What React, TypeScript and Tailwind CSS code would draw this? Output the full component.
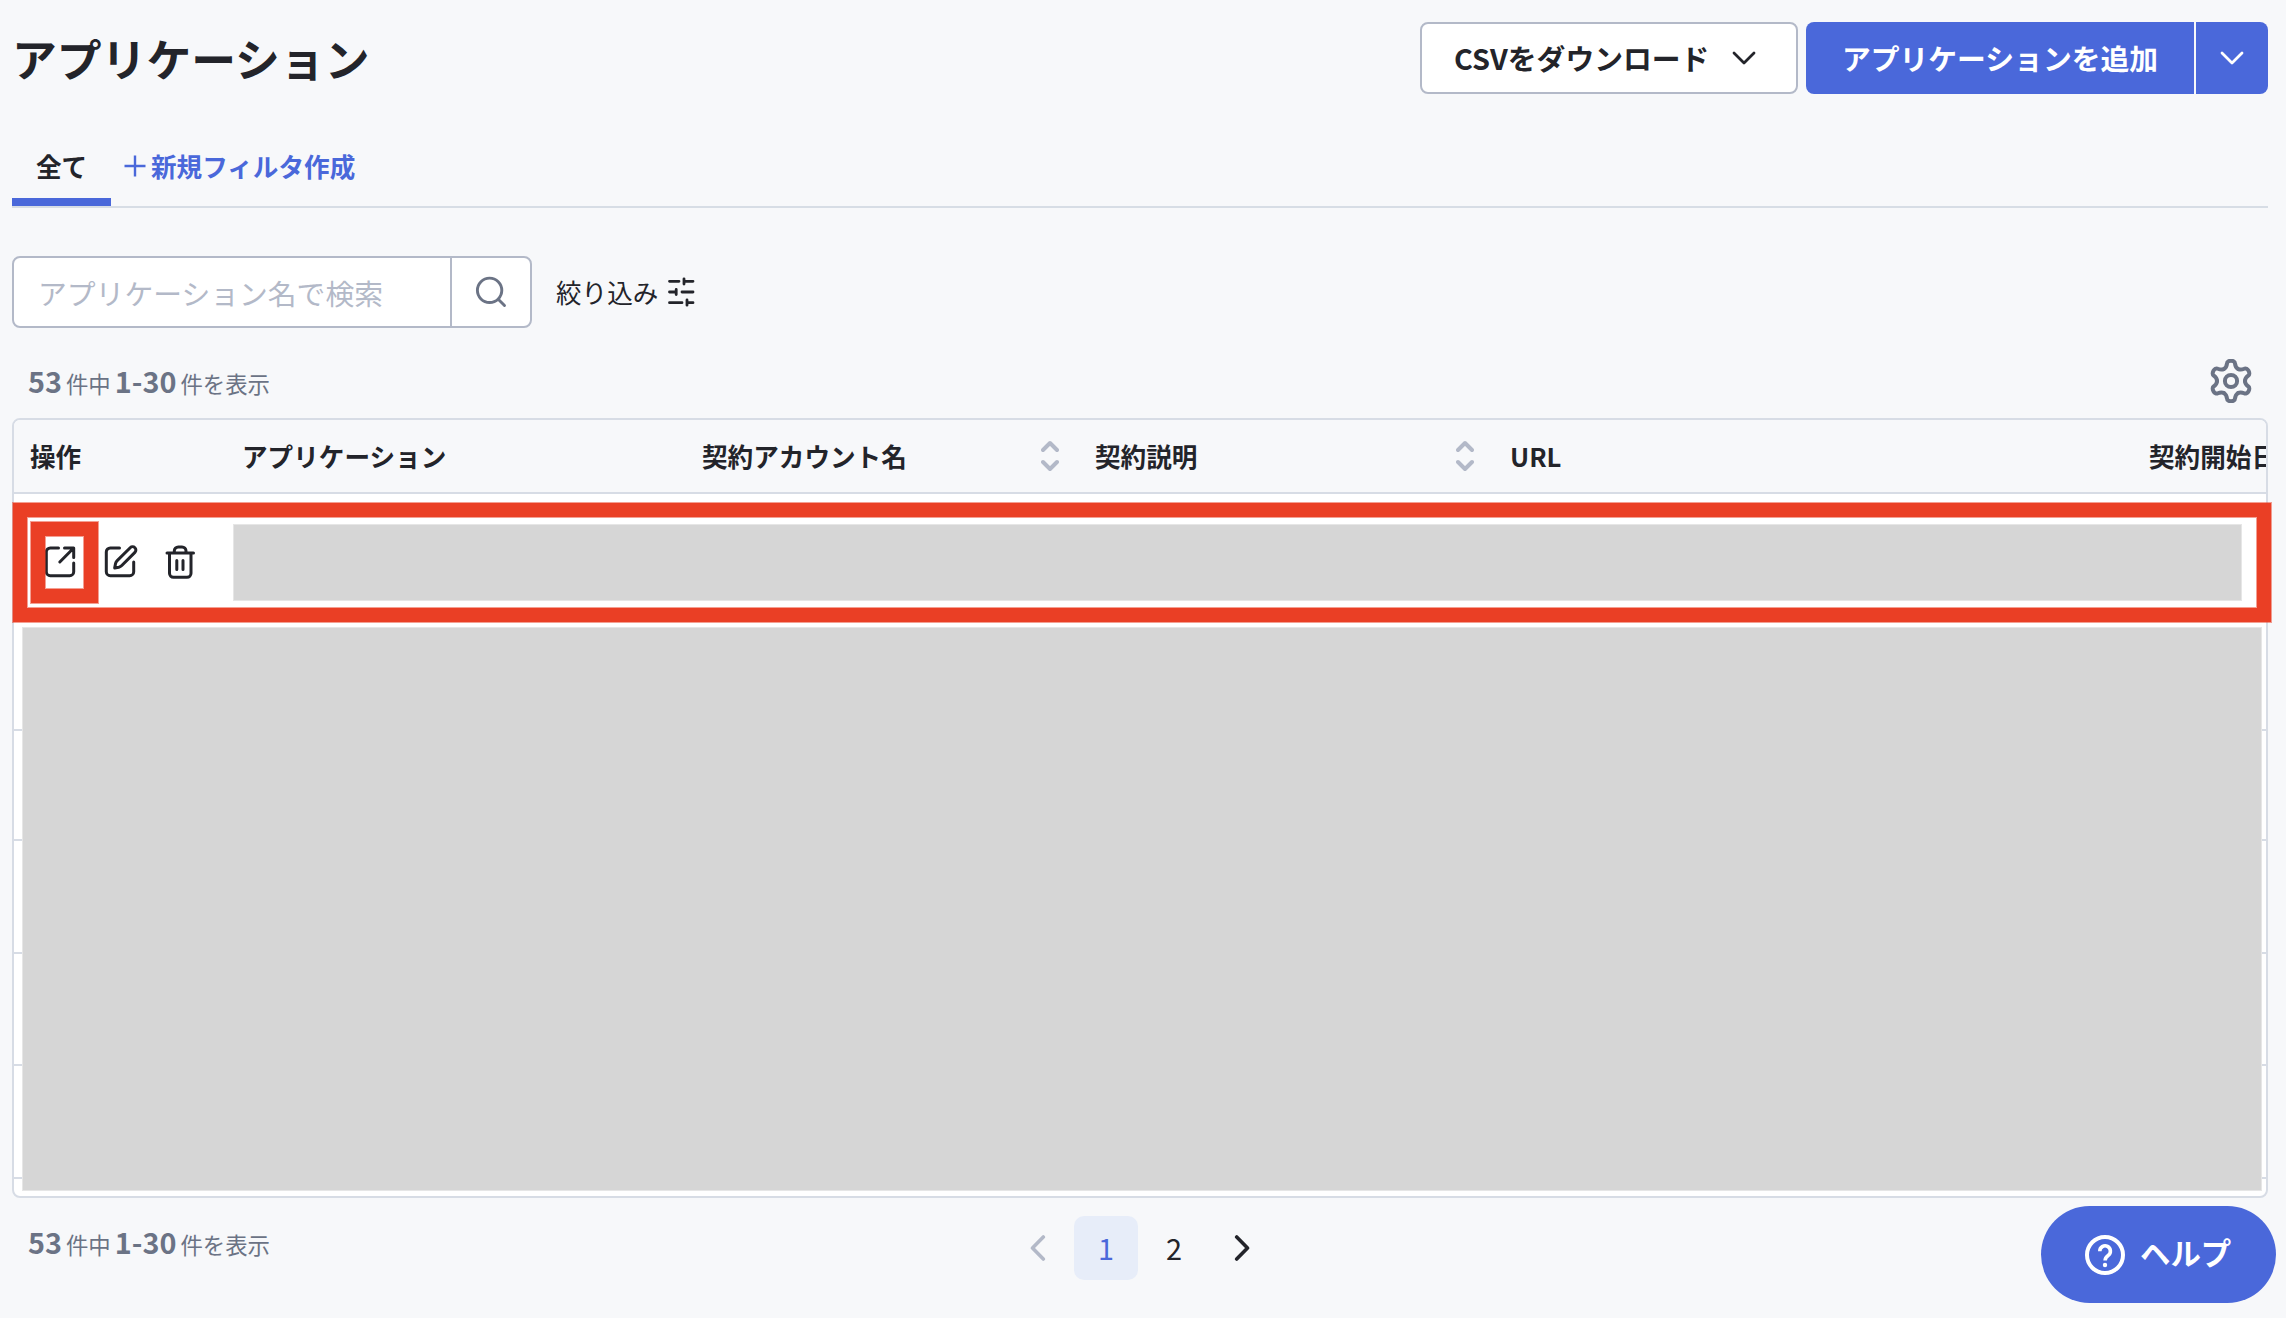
import type { ReactNode } from "react";

const columns = [
  { label: "操作", width: "w-[212px]", sortable: false },
  { label: "アプリケーション", width: "w-[460px]", sortable: false },
  { label: "契約アカウント名", width: "w-[393px]", sortable: true },
  { label: "契約説明", width: "w-[415px]", sortable: true },
  { label: "URL", width: "w-[639px]", sortable: false },
  { label: "契約開始日", width: "w-[240px]", sortable: false },
];

const emptyRows = ["h-[113px]", "h-[110px]", "h-[113px]", "h-[112px]", "h-[113px]"];

function ChevronDown() {
  return (
    <svg width="26" height="16" viewBox="0 0 26 16" fill="none" stroke="currentColor" strokeWidth="2.8" strokeLinecap="round" strokeLinejoin="round">
      <path d="M3 3l10 10L23 3" />
    </svg>
  );
}

function SortIcon() {
  return (
    <svg width="18" height="32" viewBox="0 0 18 32" fill="none" stroke="#b3b9c8" strokeWidth="4" strokeLinecap="round" strokeLinejoin="round">
      <path d="M2 10l7-7 7 7M2 22l7 7 7-7" />
    </svg>
  );
}

function GearIcon() {
  return (
    <svg width="44" height="44" viewBox="-22 -22 44 44" fill="none" stroke="#6b7385" strokeWidth="4" strokeLinecap="round">
      {[0, 60, 120, 180, 240, 300].map((angle) => (
        <path
          key={angle}
          transform={`rotate(${angle})`}
          d="M-7-12.1C-5.3-13.1-4.2-15.6-4-17.5C-3.9-21.2 3.9-21.2 4-17.5C4.2-15.6 5.3-13.1 7-12.1"
        />
      ))}
      <circle r="6.1" />
    </svg>
  );
}

function ActionIcon({ children }: { children: ReactNode }) {
  return (
    <svg width="36" height="36" viewBox="0 0 36 36" fill="none" stroke="#23242a" strokeWidth="3" strokeLinecap="round" strokeLinejoin="round">
      {children}
    </svg>
  );
}

function ResultCount() {
  return (
    <p className="flex items-baseline gap-1 text-[22.4px] leading-none text-[#6b7385]">
      <b className="text-[28.8px]">53</b>
      件中
      <b className="text-[28.8px]">1-30</b>
      件を表示
    </p>
  );
}

export default function App() {
  return (
    <div className="relative h-[1318px] w-[2286px] overflow-hidden bg-[#f7f8fa] pl-3 pr-[18px] pt-[22px] font-['Noto_Sans_CJK_JP',sans-serif] text-[#23242a]">
      {/* ヘッダー */}
      <header className="flex h-[72px] items-center justify-between">
        <h1 className="text-[44.8px] font-bold leading-none">アプリケーション</h1>
        <div className="flex gap-2 text-[28.8px] font-bold leading-none">
          <button className="flex h-[72px] w-[378px] items-center justify-between rounded-lg border-2 border-[#b3b9c8] bg-white pl-8 pr-[39px]">
            CSVをダウンロード
            <ChevronDown />
          </button>
          <div className="flex h-[72px] overflow-hidden rounded-lg text-white">
            <button className="w-[388px] bg-[#4a68da]">アプリケーションを追加</button>
            <button className="ml-0.5 flex w-[72px] items-center justify-center bg-[#4a68da]">
              <ChevronDown />
            </button>
          </div>
        </div>
      </header>

      {/* タブ */}
      <nav className="mt-[38px] flex h-[76px] border-b-2 border-[#d7dde5] text-[25.6px] font-bold leading-none">
        <div className="flex w-[99px] items-center justify-center border-b-8 border-[#4a68da] pt-0.5">全て</div>
        <div className="flex items-center pb-1.5 pl-[13px] text-[#4a68da]">
          <svg className="mr-[5px]" width="22" height="22" viewBox="0 0 22 22" stroke="currentColor" strokeWidth="2.4">
            <path d="M11 .5v21M.5 11h21" />
          </svg>
          新規フィルタ作成
        </div>
      </nav>

      {/* 検索 */}
      <div className="mt-12 flex h-[72px] items-center">
        <div className="flex h-[72px] w-[520px] rounded-lg border-2 border-[#b3b9c8] bg-white">
          <div className="flex flex-1 items-center pl-6 pt-0.5 text-[28.8px] leading-none text-[#b3b9c8]">
            アプリケーション名で検索
          </div>
          <div className="flex w-[80px] items-center justify-center border-l-2 border-[#b3b9c8]">
            <svg width="32" height="32" viewBox="0 0 32 32" fill="none" stroke="#6b7385" strokeWidth="2.9" strokeLinecap="round">
              <circle cx="14.6" cy="14.3" r="12.2" />
              <path d="M23.5 23.5l6 6" />
            </svg>
          </div>
        </div>
        <div className="ml-6 flex items-center gap-[9px] text-[25.6px] leading-none">
          絞り込み
          <svg width="28" height="30" viewBox="0 0 28 30" stroke="currentColor" strokeWidth="2.8" strokeLinecap="round">
            <path d="M2.5 4.3h9.500M17 4.300h9M17 1.800v5.200M2.500 15h6.700M9.200 12.400v5.200M15 15h11M2.500 25.700h12.500M20 25.700h6M20 23v5.200" />
          </svg>
        </div>
      </div>

      <div className="mt-[25px] flex h-14 items-center justify-between pl-4 pr-[15px]">
        <ResultCount />
        <GearIcon />
      </div>

      {/* 一覧 */}
      <section className="relative mt-[9px] h-[780px]">
        <div className="h-full overflow-hidden rounded-lg border-2 border-[#d7dce5] bg-white">
          <div className="flex h-[74px] items-center border-b-2 border-[#d7dce5] bg-[#f7f8fa] pl-4">
            {columns.map((column) => (
              <div key={column.label} className={`flex shrink-0 items-center justify-between pr-9 text-[25.6px] font-bold leading-none ${column.width}`}>
                {column.label}
                {column.sortable && <SortIcon />}
              </div>
            ))}
          </div>
          <div className="flex h-[124px] items-center gap-6 pl-7 pt-3">
            <ActionIcon>
              <path d="M16.5 4H8.3a4 4 0 0 0-4 4v19.7a4 4 0 0 0 4 4h19.4a4 4 0 0 0 4-4V19M22.5 4h9.2v9.5M31.2 4.5L17.8 18" />
            </ActionIcon>
            <ActionIcon>
              <path d="M17.5 4H8.3a4 4 0 0 0-4 4v19.7a4 4 0 0 0 4 4h19.4a4 4 0 0 0 4-4V18" />
              <path d="M28.2 3.7a3.3 3.3 0 0 1 4.7 4.7L19.8 21.5a6 6 0 0 1-3 1.7l-4.1.7.8-4.2a6 6 0 0 1 1.7-3z" />
            </ActionIcon>
            <ActionIcon>
              <path d="M5 9h26.5M12.3 9V7a4 4 0 0 1 4-4h3.7a4 4 0 0 1 4 4v2M7.5 9v20.3a4 4 0 0 0 4 4h13.5a4 4 0 0 0 4-4V9M14.8 16.5v9M21 16.5v9" />
            </ActionIcon>
          </div>
          {emptyRows.map((height, i) => (
            <div key={i} className={`border-b-2 border-[#d7dce5] ${height}`} />
          ))}
        </div>

        {/* マスクと強調枠 */}
        <div className="absolute left-[11px] top-[210px] h-[562px] w-[2238px] bg-[#d6d6d6] shadow-[0_0_0_1px_#e6e6e6]" />
        <div className="absolute left-[222px] top-[107px] h-[75px] w-[2007px] bg-[#d6d6d6] shadow-[0_0_0_1px_#e6e6e6]" />
        <div className="absolute left-px top-[85px] h-[119px] w-[2258px] border-[14px] border-[#ea3f25] shadow-[0_0_0_1px_#ea3f2580,inset_0_0_0_1px_#ea3f2580]" />
        <div className="absolute left-[19px] top-[104px] h-[81px] w-[67px] border-[14px] border-[#ea3f25] shadow-[0_0_0_1px_#ea3f2580,inset_0_0_0_1px_#ea3f2580]" />
      </section>

      {/* ページネーション */}
      <footer className="grid grid-cols-3 pt-[18px]">
        <div className="pl-4 pt-3">
          <ResultCount />
        </div>
        <div className="flex h-16 justify-center gap-1 text-[28.8px] leading-none">
          <button className="flex w-16 items-center justify-center text-[#b3b9c8]">
            <svg width="16" height="28" viewBox="0 0 16 28" fill="none" stroke="currentColor" strokeWidth="3.6" strokeLinecap="round" strokeLinejoin="round">
              <path d="M13.3 3L2.5 14l10.8 11" />
            </svg>
          </button>
          <button className="w-16 rounded-[10px] bg-[#e7edf9] text-[#4a68da]">1</button>
          <button className="w-16">2</button>
          <button className="flex w-16 items-center justify-center">
            <svg width="16" height="28" viewBox="0 0 16 28" fill="none" stroke="currentColor" strokeWidth="3.6" strokeLinecap="round" strokeLinejoin="round">
              <path d="M2.7 3l10.8 11L2.7 25" />
            </svg>
          </button>
        </div>
      </footer>

      <button className="absolute left-[2041px] top-[1206px] flex h-[97px] w-[235px] items-center rounded-full bg-[#4a68da] pl-[44px] text-[30.4px] font-bold leading-none text-white">
        <svg className="mr-[15px]" width="40" height="40" viewBox="0 0 40 40" fill="none" stroke="currentColor" strokeWidth="4">
          <circle cx="20" cy="20" r="18" />
          <path d="M14.8 16.2a5.3 5.3 0 1 1 8.3 4.3c-2 1.4-3 2.3-3 5" strokeWidth="3.6" />
          <circle cx="20" cy="30" r="2.2" fill="currentColor" stroke="none" />
        </svg>
        <span className="pb-1">ヘルプ</span>
      </button>
    </div>
  );
}
